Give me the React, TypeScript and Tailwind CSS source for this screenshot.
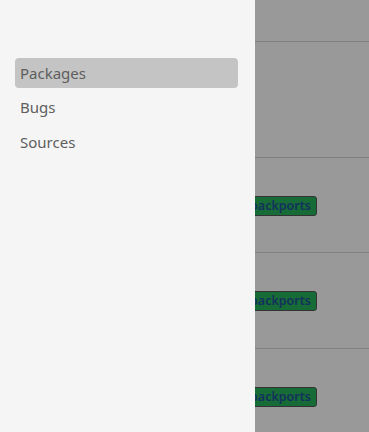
import { useState } from "react";

const FONT = { fontFamily: '"Noto Sans", "Open Sans", sans-serif' };

// rows of the page that sits dimmed behind the drawer
const rows = [
  { name: "linux-image", badge: null, height: "h-[116px]" },
  { name: "firefox-esr", badge: "backports", height: "h-[95px]" },
  { name: "libreoffice", badge: "backports", height: "h-[96px]" },
  { name: "mesa", badge: "backports", height: "h-[96px]" },
];

const navItems = ["Packages", "Bugs", "Sources"];

function Badge({ label }: { label: string }) {
  return (
    <span className="flex h-[20px] items-center rounded-[3px] border border-[#555] bg-[#27b25c] px-[5px] text-[12.5px] font-semibold leading-none text-[#21539a]">
      {label}
    </span>
  );
}

export default function App() {
  const [active, setActive] = useState("Packages");

  return (
    <div className="relative h-[432px] w-[369px] overflow-hidden bg-white" style={FONT}>
      {/* page behind the drawer */}
      <div className="flex flex-col">
        <div className="h-[42px] border-b border-[#d5d5d5]" />
        {rows.map((row) => (
          <div key={row.name} className={"flex items-start border-b border-[#d5d5d5] " + row.height}>
            <div className="w-[244px] shrink-0 px-4 pt-[38px] text-sm leading-5 text-[#333]">
              {row.name}
            </div>
            {row.badge && (
              <div className="flex pt-[38px]">
                <Badge label={row.badge} />
              </div>
            )}
          </div>
        ))}
      </div>

      {/* scrim */}
      <div className="absolute inset-0 bg-black/40" />

      {/* drawer */}
      <aside className="absolute inset-y-0 left-0 w-[255px] bg-[#f5f5f5]">
        <nav className="flex flex-col gap-[4.5px] pl-[15px] pr-[17px] pt-[58px]">
          {navItems.map((item) => (
            <button
              key={item}
              onClick={() => setActive(item)}
              className={
                "flex h-[30px] items-center rounded-[4px] px-[5px] text-left text-[15px] text-[#5e5e5e] " +
                (active === item ? "bg-[#c4c4c4]" : "")
              }
            >
              {item}
            </button>
          ))}
        </nav>
      </aside>
    </div>
  );
}
